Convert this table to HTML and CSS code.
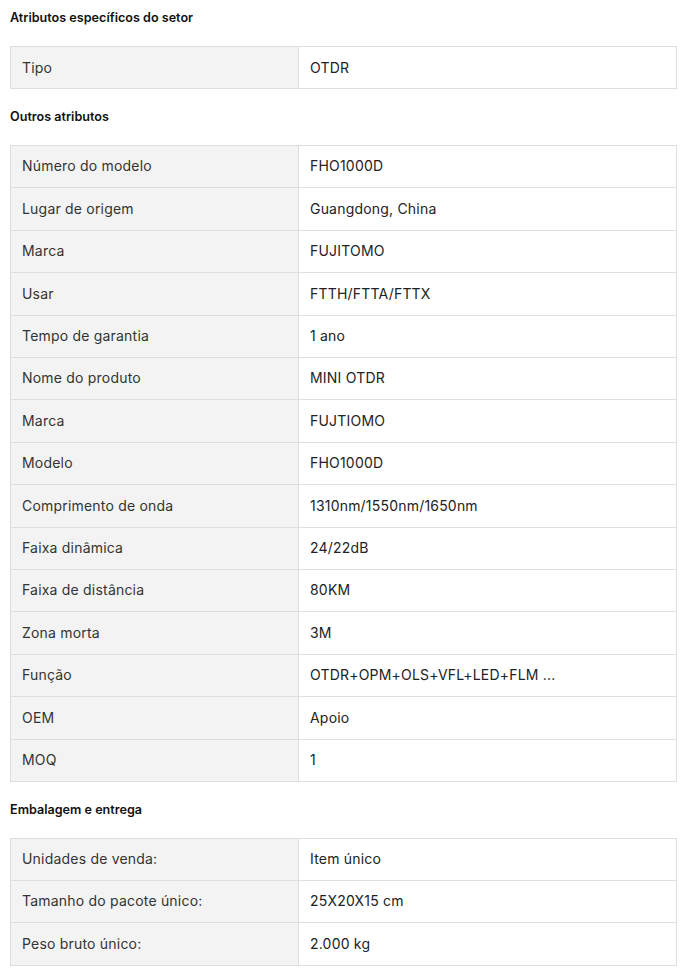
FILE: index.html
```html
<!DOCTYPE html>
<html lang="pt">
<head>
<meta charset="utf-8">
<link rel="stylesheet" href="styles.css">
</head>
<body>
<div class="page">
  <h3 class="title">Atributos específicos do setor</h3>
  <table class="attrs">
    <tr><td class="k">Tipo</td><td class="v">OTDR</td></tr>
  </table>

  <h3 class="title">Outros atributos</h3>
  <table class="attrs">
    <tr><td class="k">Número do modelo</td><td class="v">FHO1000D</td></tr>
    <tr><td class="k">Lugar de origem</td><td class="v">Guangdong, China</td></tr>
    <tr><td class="k">Marca</td><td class="v">FUJITOMO</td></tr>
    <tr><td class="k">Usar</td><td class="v">FTTH/FTTA/FTTX</td></tr>
    <tr><td class="k">Tempo de garantia</td><td class="v">1 ano</td></tr>
    <tr><td class="k">Nome do produto</td><td class="v">MINI OTDR</td></tr>
    <tr><td class="k">Marca</td><td class="v">FUJTIOMO</td></tr>
    <tr><td class="k">Modelo</td><td class="v">FHO1000D</td></tr>
    <tr><td class="k">Comprimento de onda</td><td class="v">1310nm/1550nm/1650nm</td></tr>
    <tr><td class="k">Faixa dinâmica</td><td class="v">24/22dB</td></tr>
    <tr><td class="k">Faixa de distância</td><td class="v">80KM</td></tr>
    <tr><td class="k">Zona morta</td><td class="v">3M</td></tr>
    <tr><td class="k">Função</td><td class="v">OTDR+OPM+OLS+VFL+LED+FLM ...</td></tr>
    <tr><td class="k">OEM</td><td class="v">Apoio</td></tr>
    <tr><td class="k">MOQ</td><td class="v">1</td></tr>
  </table>

  <h3 class="title">Embalagem e entrega</h3>
  <table class="attrs">
    <tr><td class="k">Unidades de venda:</td><td class="v">Item único</td></tr>
    <tr><td class="k">Tamanho do pacote único:</td><td class="v">25X20X15 cm</td></tr>
    <tr><td class="k">Peso bruto único:</td><td class="v">2.000 kg</td></tr>
  </table>
</div>
</body>
</html>
```
FILE: styles.css
```css
html, body {
  margin: 0;
  padding: 0;
  background: #ffffff;
}
body {
  font-family: Inter, "Noto Sans", "Liberation Sans", sans-serif;
  color: #222222;
}
.page {
  padding: 8px 9px 0 10px;
}
.title {
  margin: 0 0 18px;
  font-size: 12.6px;
  line-height: 20px;
  font-weight: 600;
  color: #111111;
}
.attrs {
  width: 100%;
  border-collapse: collapse;
  margin-bottom: 17.5px;
  font-size: 14px;
  line-height: 22.4px;
  letter-spacing: 0.2px;
}
.attrs td {
  border: 1px solid #dedede;
  padding: 9.5px 11px;
  vertical-align: middle;
}
.attrs .k {
  width: 265px;
  background: #f3f3f3;
  color: #333333;
}
.attrs .v {
  background: #ffffff;
  color: #222222;
}
```
